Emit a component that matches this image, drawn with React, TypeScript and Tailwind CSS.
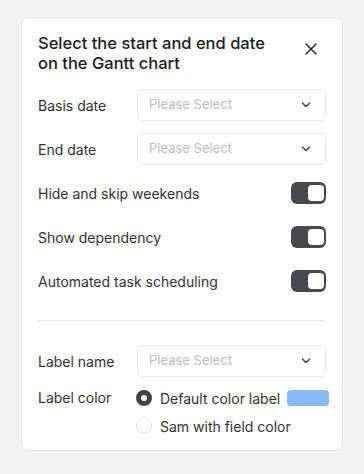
import React from 'react';

const font = { fontFamily: 'Inter, "Noto Sans", sans-serif' };

function Chevron() {
  return (
    <svg width="10" height="6" viewBox="0 0 10 6" fill="none" className="text-[#3a3d42]">
      <path d="M1.5 1.2L5 4.6L8.5 1.2" stroke="currentColor" strokeWidth="1.4" strokeLinecap="round" strokeLinejoin="round" />
    </svg>
  );
}

function SelectRow({ label }: { label: string }) {
  return (
    <div className="flex items-center h-8">
      <span className="w-[99px] shrink-0 text-[14px] text-[#333]">{label}</span>
      <div className="flex-1 h-8 flex items-center justify-between pl-[11px] pr-[14px] bg-white border border-[#e8e8e8] rounded-[5px]">
        <span className="text-[13px] text-[#bdbdbd]">Please Select</span>
        <Chevron />
      </div>
    </div>
  );
}

function ToggleRow({ label }: { label: string }) {
  return (
    <div className="flex items-center justify-between h-8">
      <span className="text-[14px] text-[#333]">{label}</span>
      <div className="w-[35px] h-[22px] rounded-[6px] bg-[#46494e] flex items-center justify-end pr-[2px]">
        <div className="w-[16px] h-[16px] rounded-[4px] bg-white" />
      </div>
    </div>
  );
}

export default function App() {
  return (
    <div className="min-h-[474px] bg-[#f5f5f5] pt-[17px] pl-[21px]" style={font}>
      <div className="w-[322px] bg-white border border-[#e6e6e6] rounded-[7px] px-4 pt-[15px] pb-[13px]">
        <div className="flex items-start justify-between">
          <h2 className="text-[16.5px] leading-[20px] font-medium text-[#1c1c1c]">
            Select the start and end date
            <br />
            on the Gantt chart
          </h2>
          <button className="mt-[10px] mr-[9px] text-[#2a2a2a]">
            <svg width="12" height="12" viewBox="0 0 12 12" fill="none">
              <path d="M1 1L11 11M11 1L1 11" stroke="currentColor" strokeWidth="1.5" strokeLinecap="round" />
            </svg>
          </button>
        </div>

        <div className="mt-4 flex flex-col gap-3">
          <SelectRow label="Basis date" />
          <SelectRow label="End date" />
          <ToggleRow label="Hide and skip weekends" />
          <ToggleRow label="Show dependency" />
          <ToggleRow label="Automated task scheduling" />
        </div>

        <div className="mt-[23px] mb-6 h-px bg-[#e8e8e8]" />

        <SelectRow label="Label name" />

        <div className="mt-[10px] flex">
          <span className="w-[98px] shrink-0 text-[14px] text-[#333] leading-[22px]">Label color</span>
          <div className="flex-1 flex flex-col gap-[6px]">
            <div className="flex items-center h-[22px]">
              <div className="w-4 h-4 rounded-full bg-[#3f4247] flex items-center justify-center">
                <div className="w-[6px] h-[6px] rounded-full bg-white" />
              </div>
              <span className="ml-2 text-[14px] text-[#333]">Default color label</span>
              <div className="ml-auto -mr-[3px] w-[42px] h-4 rounded-[4px] bg-[#8ab9f7]" />
            </div>
            <div className="flex items-center h-[22px]">
              <div className="w-4 h-4 rounded-full bg-white border border-[#e3e3e3]" />
              <span className="ml-2 text-[14px] text-[#333]">Sam with field color</span>
            </div>
          </div>
        </div>
      </div>
    </div>
  );
}
